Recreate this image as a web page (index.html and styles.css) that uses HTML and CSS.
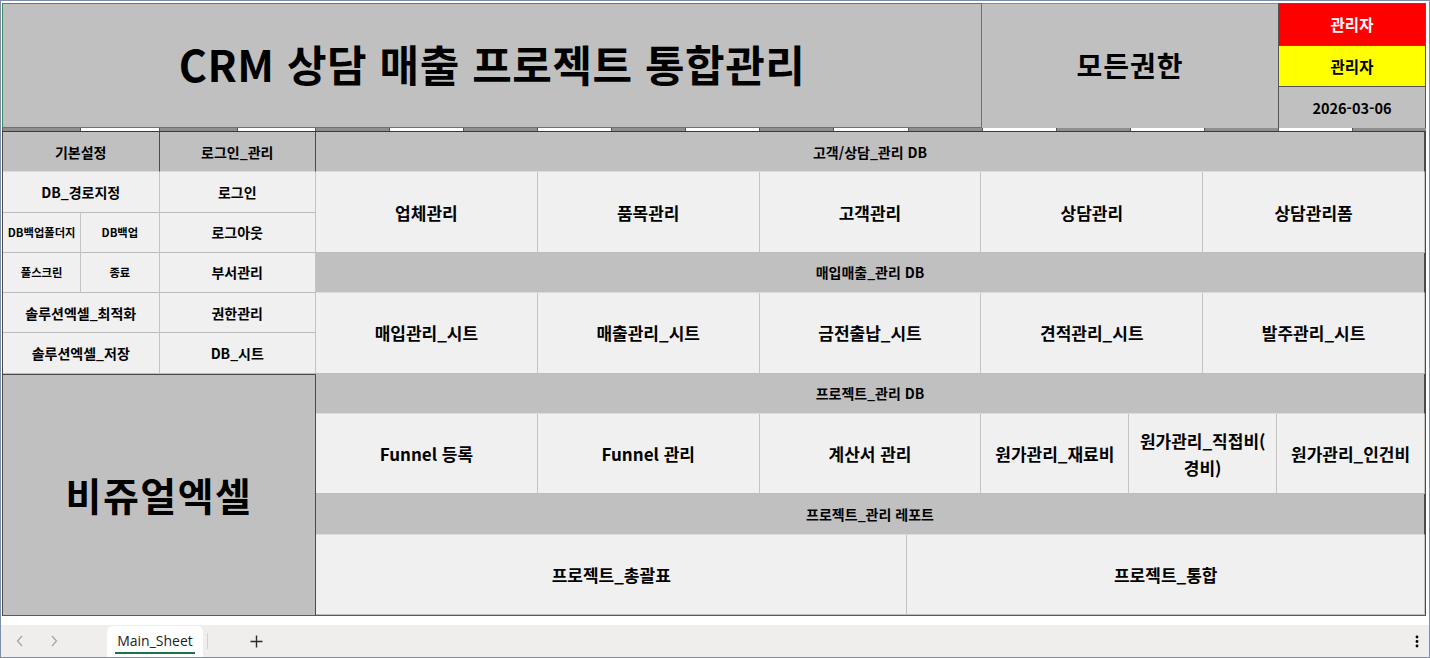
FILE: index.html
```html
<!DOCTYPE html>
<html lang="ko">
<head>
<meta charset="UTF-8">
<meta name="viewport" content="width=device-width, initial-scale=1.0">
<title>Main_Sheet</title>
<link rel="stylesheet" href="styles.css">
</head>
<body>
<div class="window">
  <div class="sheet">
    <div class="top">
      <div class="title">CRM 상담 매출 프로젝트 통합관리</div>
      <div class="perm">모든권한</div>
      <div class="status">
        <div class="badge red">관리자</div>
        <div class="badge yellow">관리자</div>
        <div class="badge date">2026-03-06</div>
      </div>
    </div>

    <div class="strip">
      <span></span><span></span><span></span><span></span><span></span>
      <span></span><span></span><span></span><span></span><span></span>
      <span></span><span></span><span></span><span></span><span></span>
      <span></span><span></span><span></span><span></span>
    </div>

    <div class="board">
      <div class="cell hd sm c2">기본설정</div>
      <div class="cell hd sm c2">로그인_관리</div>
      <div class="cell hd sm c15">고객/상담_관리 DB</div>

      <div class="cell btn sm c2">DB_경로지정</div>
      <div class="cell btn sm c2">로그인</div>
      <div class="cell btn lg c3 r2">업체관리</div>
      <div class="cell btn lg c3 r2">품목관리</div>
      <div class="cell btn lg c3 r2">고객관리</div>
      <div class="cell btn lg c3 r2">상담관리</div>
      <div class="cell btn lg c3 r2">상담관리폼</div>

      <div class="cell btn xs">DB백업폴더지</div>
      <div class="cell btn xs">DB백업</div>
      <div class="cell btn sm c2">로그아웃</div>

      <div class="cell btn xs">풀스크린</div>
      <div class="cell btn xs">종료</div>
      <div class="cell btn sm c2">부서관리</div>
      <div class="cell hd sm c15">매입매출_관리 DB</div>

      <div class="cell btn sm c2">솔루션엑셀_최적화</div>
      <div class="cell btn sm c2">권한관리</div>
      <div class="cell btn lg c3 r2">매입관리_시트</div>
      <div class="cell btn lg c3 r2">매출관리_시트</div>
      <div class="cell btn lg c3 r2">금전출납_시트</div>
      <div class="cell btn lg c3 r2">견적관리_시트</div>
      <div class="cell btn lg c3 r2">발주관리_시트</div>

      <div class="cell btn sm c2">솔루션엑셀_저장</div>
      <div class="cell btn sm c2">DB_시트</div>

      <div class="cell logo c4 r6">비쥬얼엑셀</div>
      <div class="cell hd sm c15">프로젝트_관리 DB</div>

      <div class="cell btn lg c3 r2">Funnel 등록</div>
      <div class="cell btn lg c3 r2">Funnel 관리</div>
      <div class="cell btn lg c3 r2">계산서 관리</div>
      <div class="cell btn lg c2 r2">원가관리_재료비</div>
      <div class="cell btn lg wrap c2 r2">원가관리_직접비(<br>경비)</div>
      <div class="cell btn lg c2 r2">원가관리_인건비</div>

      <div class="cell hd sm c15">프로젝트_관리 레포트</div>

      <div class="cell btn lg c8 r2">프로젝트_총괄표</div>
      <div class="cell btn lg c7 r2">프로젝트_통합</div>
    </div>
  </div>

  <div class="tabs">
    <span class="nav">
      <svg width="8" height="12" viewBox="0 0 8 12"><path d="M6 1 1.5 6 6 11" fill="none" stroke="#a3a3a3" stroke-width="1.2"/></svg>
    </span>
    <span class="nav">
      <svg width="8" height="12" viewBox="0 0 8 12"><path d="M2 1 6.5 6 2 11" fill="none" stroke="#a3a3a3" stroke-width="1.2"/></svg>
    </span>
    <div class="tab">Main_Sheet</div>
    <span class="sep"></span>
    <span class="add">
      <svg width="13" height="13" viewBox="0 0 13 13"><path d="M6.5 0.5v12M0.5 6.5h12" fill="none" stroke="#2b2b2b" stroke-width="1.4"/></svg>
    </span>
    <span class="more">
      <svg width="4" height="13" viewBox="0 0 4 13"><circle cx="2" cy="2" r="1.4"/><circle cx="2" cy="6.5" r="1.4"/><circle cx="2" cy="11" r="1.4"/></svg>
    </span>
  </div>
</div>
</body>
</html>
```

FILE: styles.css
```css
* {
  box-sizing: border-box;
}

body {
  margin: 0;
  font-family: "Noto Sans CJK KR", "Noto Sans", sans-serif;
  color: #000;
  background: #fff;
}

.window {
  width: 1430px;
  height: 658px;
  border: 1px solid #7d8fa8;
  display: flex;
  flex-direction: column;
  overflow: hidden;
}

.sheet {
  padding: 2px 0 0 1px;
  height: 624px;
}

/* header block */
.top {
  display: flex;
  height: 125px;
}

.title {
  width: 980px;
  display: flex;
  align-items: center;
  justify-content: center;
  background: #c0c0c0;
  border: 1px solid #3d8c62;
  font-size: 43px;
  font-weight: 700;
  letter-spacing: 0.5px;
  padding-bottom: 6px;
}

.perm {
  width: 296px;
  display: flex;
  align-items: center;
  justify-content: center;
  background: #c0c0c0;
  border-top: 1px solid #8a8a8a;
  font-size: 28px;
  font-weight: 700;
  letter-spacing: 1px;
  padding-bottom: 2px;
}

.status {
  width: 148px;
  display: flex;
  flex-direction: column;
  border-left: 1px solid #555;
  border-top: 1px solid #555;
  border-right: 1px solid #555;
}

.badge {
  flex: 1;
  display: flex;
  align-items: center;
  justify-content: center;
  font-size: 15.5px;
  font-weight: 700;
  border-bottom: 1px solid #555;
}

.badge:last-child {
  border-bottom: none;
}

.red {
  background: #ff0000;
  color: #fff;
}

.yellow {
  background: #ffff00;
}

.date {
  background: #c0c0c0;
  font-size: 14.5px;
}

/* thin row under the header */
.strip {
  display: grid;
  grid-template-columns: repeat(4, 78.25px) repeat(15, 1fr);
  width: 1424px;
  height: 4px;
  border-bottom: 1px solid #3a3a3a;
}

.strip span {
  background: #fff;
  border-left: 1px solid #555;
}

.strip span:nth-child(odd) {
  background: #8e8e8e;
}

/* button grid */
.board {
  display: grid;
  grid-template-columns: repeat(4, 78.25px) repeat(15, 1fr);
  grid-template-rows: repeat(12, 40.25px);
  width: 1424px;
  border-left: 1px solid #4a4a4a;
  border-right: 1px solid #4a4a4a;
  border-bottom: 1px solid #5a5a5a;
}

.cell {
  display: flex;
  align-items: center;
  justify-content: center;
  text-align: center;
  font-weight: 700;
  white-space: nowrap;
}

.hd {
  background: #c0c0c0;
  border-right: 1px solid #4a4a4a;
  border-bottom: 1px solid #dcdcdc;
}

.btn {
  background: #f0f0f0;
  border-right: 1px solid #c4c4c4;
  border-bottom: 1px solid #bcbcbc;
}

.logo {
  background: #c0c0c0;
  border-right: 1px solid #4a4a4a;
  border-top: 1px solid #4a4a4a;
  font-size: 39px;
  letter-spacing: 1.5px;
  padding-bottom: 2px;
}

.xs {
  font-size: 11.3px;
}

.sm {
  font-size: 14px;
}

.lg {
  font-size: 17px;
}

.wrap {
  line-height: 27px;
}

.c2 { grid-column: span 2; }
.c3 { grid-column: span 3; }
.c4 { grid-column: span 4; }
.c7 { grid-column: span 7; }
.c8 { grid-column: span 8; }
.c15 { grid-column: span 15; }
.r2 { grid-row: span 2; }
.r6 { grid-row: span 6; }

/* sheet tabs */
.tabs {
  flex: 1;
  display: flex;
  align-items: stretch;
  background: #efeeec;
  font-family: "Open Sans", "Noto Sans", sans-serif;
}

.nav {
  width: 34px;
  display: flex;
  align-items: center;
  justify-content: center;
}

.nav:first-child {
  margin-left: 2px;
}

.tab {
  margin-left: 36px;
  margin-top: 1px;
  width: 96px;
  background: #fff;
  border-radius: 6px 6px 0 0;
  display: flex;
  align-items: center;
  justify-content: center;
  font-size: 14px;
  color: #222;
  position: relative;
  padding-bottom: 3px;
}

.tab::after {
  content: "";
  position: absolute;
  left: 8px;
  right: 8px;
  bottom: 3px;
  height: 2px;
  background: #1f7244;
}

.sep {
  width: 1px;
  margin: 8px 0 8px 4px;
  background: #d2d2d2;
}

.add {
  margin-left: 42px;
  display: flex;
  align-items: center;
}

.more {
  margin-left: auto;
  margin-right: 10px;
  display: flex;
  align-items: center;
}
```
